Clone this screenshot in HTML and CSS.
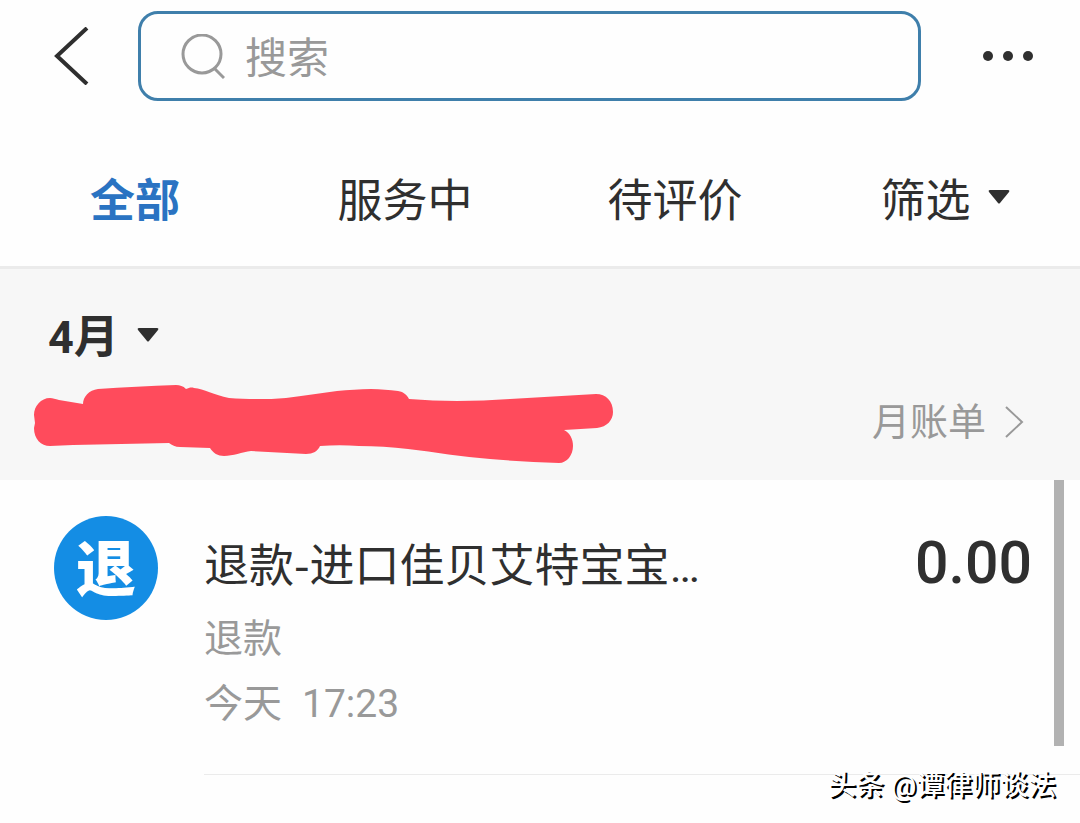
FILE: index.html
```html
<!DOCTYPE html>
<html lang="zh-CN">
<head>
    <meta charset="UTF-8">
    <meta name="viewport" content="width=device-width, initial-scale=1.0">
    <title>账单</title>
    <link rel="stylesheet" href="styles.css">
</head>
<body>

<header class="topbar">
    <button type="button" class="back" aria-label="返回">
        <svg width="36" height="58" viewBox="0 0 36 58"><path d="M34 1 L4 29 L34 57" fill="none" stroke="#2f2f2f" stroke-width="4"/></svg>
    </button>
    <label class="search">
        <svg width="44" height="46" viewBox="0 0 44 46" fill="none" stroke="#999" stroke-width="3">
            <circle cx="21" cy="20" r="19"/>
            <path d="M33 34 L43 44"/>
        </svg>
        <input type="search" placeholder="搜索" aria-label="搜索">
    </label>
    <button type="button" class="more" aria-label="更多">
        <svg width="50" height="10" viewBox="0 0 50 10" fill="#2f2f2f">
            <circle cx="5" cy="5" r="5"/>
            <circle cx="25" cy="5" r="5"/>
            <circle cx="45" cy="5" r="5"/>
        </svg>
    </button>
</header>

<nav class="tabs">
    <button type="button" class="tab active">全部</button>
    <button type="button" class="tab">服务中</button>
    <button type="button" class="tab">待评价</button>
    <button type="button" class="tab">筛选
        <svg class="arrow" width="22" height="14" viewBox="0 0 22 14"><path d="M2 0 H20 Q22 0 21 2 L12 13 Q11 14 10 13 L1 2 Q0 0 2 0 Z"/></svg>
    </button>
</nav>

<main>
    <section class="month">
        <label class="picker">
            <select aria-label="月份">
                <option>4月</option>
            </select>
            <svg class="arrow" width="22" height="14" viewBox="0 0 22 14"><path d="M2 0 H20 Q22 0 21 2 L12 13 Q11 14 10 13 L1 2 Q0 0 2 0 Z"/></svg>
        </label>
        <div class="summary">
            <svg class="scribble" width="581" height="80" viewBox="0 0 581 80">
                <path d="M17 14 C20 14 22 15 26 16 L50 20 C50 13 56 6 65 5 C90 3 117 2 143 1 C147 1 150 2 153 5 C156 4 158 3 161 4 C171 5 181 11 196 14 C205 15 215 15 224 15 C234 15 243 15 253 14 C271 12 287 9 304 7 C315 6 327 5 338 5 C348 5 356 6 365 7 C371 8 374 11 376 15 C392 16 408 17 424 17 C442 17 459 16 477 15 L563 10 C573 10 580 17 580 28 C580 36 574 43 564 44 L531 46 C537 49 540 55 540 62 C540 71 534 79 526 79 C503 78 479 77 457 75 C429 73 402 68 375 65 C359 63 342 62 326 62 C313 61 300 61 287 62 C285 67 280 70 273 70 L218 67 C209 68 200 72 191 72 C185 72 180 69 177 64 L147 63 C142 63 139 61 136 59 L40 61 L17 62 C8 62 1 55 1 44 L2 39 L1 31 C1 22 8 14 17 14 Z" fill="#ff4b5c"/>
            </svg>
            <a href="#" class="statement">月账单
                <svg width="20" height="34" viewBox="0 0 20 34"><path d="M2 2 L18 17 L2 32" fill="none" stroke="#999" stroke-width="2"/></svg>
            </a>
        </div>
    </section>

    <section class="list">
        <article class="bill">
            <div class="badge">退</div>
            <div class="detail">
                <div class="line">
                    <h2>退款-进口佳贝艾特宝宝<span class="dots">…</span></h2>
                    <span class="amount">0.00</span>
                </div>
                <p>退款</p>
                <p class="time"><span>今天</span><span>17:23</span></p>
            </div>
        </article>
        <div class="scrollbar"></div>
    </section>
</main>

<div class="watermark">头条 @谭律师谈法</div>

</body>
</html>
```

FILE: styles.css
```css
* {
    box-sizing: border-box;
}
body {
    margin: 0;
    min-height: 100vh;
    position: relative;
    background: #fefefe;
    color: #2f2f2f;
    font-family: Roboto, "Noto Sans CJK SC", sans-serif;
}
button, input, select {
    font: inherit;
    color: inherit;
    background: none;
    border: none;
    padding: 0;
}
button {
    cursor: pointer;
}
svg {
    display: block;
    flex: none;
}
.arrow {
    fill: #2f2f2f;
}

.topbar {
    display: flex;
    align-items: center;
    height: 112px;
    padding: 0 47px 0 53px;
}
.search {
    flex: 1;
    display: flex;
    align-items: center;
    gap: 20px;
    height: 90px;
    margin: 0 62px 0 49px;
    padding: 2px 40px 0;
    border: 3px solid #3f7fab;
    border-radius: 20px;
}
.search input {
    flex: 1;
    min-width: 0;
    padding-top: 4px;
    font-size: 42px;
    line-height: 60px;
    outline: none;
}
.search input::placeholder {
    color: #999;
    opacity: 1;
}

.tabs {
    display: grid;
    grid-template-columns: repeat(4, 1fr);
    padding: 16px 0 0;
    border-bottom: 3px solid #ebebeb;
}
.tab {
    display: flex;
    align-items: center;
    justify-content: center;
    gap: 17px;
    height: 138px;
    font-size: 45px;
}
.tab.active {
    color: #2a73c2;
    font-weight: 700;
}

.month {
    padding: 36px 56px 16px 33px;
    background: #f7f7f7;
}
.picker {
    display: inline-flex;
    align-items: center;
    gap: 18px;
    padding-left: 15px;
}
.picker select {
    appearance: none;
    height: 64px;
    font-size: 45px;
    font-weight: 700;
}
.picker .arrow {
    margin-bottom: 4px;
}
.summary {
    display: flex;
    align-items: center;
    justify-content: space-between;
    margin-top: 15px;
}
.statement {
    display: flex;
    align-items: center;
    gap: 18px;
    padding-bottom: 4px;
    color: #999;
    font-size: 38px;
    line-height: 56px;
    text-decoration: none;
}

.list {
    position: relative;
}
.bill {
    display: flex;
    padding: 36px 0 0 54px;
}
.badge {
    flex: none;
    width: 104px;
    height: 104px;
    border-radius: 50%;
    background: #148de4;
    color: #fff;
    font-size: 60px;
    font-weight: 900;
    line-height: 110px;
    text-align: center;
}
.detail {
    flex: 1;
    min-width: 0;
    margin-left: 46px;
    padding: 9px 0 42px;
    border-bottom: 1px solid #ebebeb;
}
.line {
    display: flex;
    align-items: center;
    justify-content: space-between;
    height: 74px;
    padding-right: 48px;
}
h2 {
    margin: 0;
    font-family: "Noto Sans CJK SC", sans-serif;
    font-size: 45px;
    font-weight: 400;
}
.dots {
    font-family: Roboto, sans-serif;
}
.amount {
    font-size: 59px;
    font-weight: 500;
}
p {
    margin: 9px 0 0;
    color: #999;
    font-size: 39px;
    line-height: 56px;
}
.line + p {
    margin-top: 12px;
}
.time {
    display: flex;
    gap: 20px;
}
.scrollbar {
    position: absolute;
    top: 0;
    right: 16px;
    width: 10px;
    height: 266px;
    background: #b2b2b2;
}

.watermark {
    position: absolute;
    right: 24px;
    bottom: 16px;
    color: #fff;
    font-size: 28px;
    font-weight: 500;
    line-height: 42px;
    text-shadow: 2px 2px 0 #000;
}
```
